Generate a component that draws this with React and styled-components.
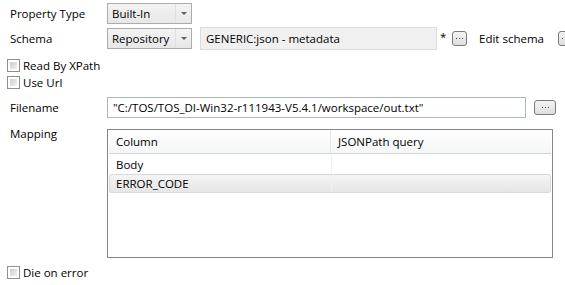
import React from "react";
import styled, { createGlobalStyle } from "styled-components";

const Global = createGlobalStyle`
  html, body { margin: 0; padding: 0; background: #fff; overflow: hidden; }
  body { font-family: "Open Sans", "Noto Sans", sans-serif; font-size: 11.5px; color: #000; }
`;

const Page = styled.div`
  width: 565px;
  height: 285px;
  padding-top: 3px;
  box-sizing: border-box;
  display: flex;
  flex-direction: column;
  overflow: hidden;
`;

const Row = styled.div`
  display: flex;
  align-items: ${(p) => p.$align || "center"};
  height: ${(p) => p.$h}px;
  margin-top: ${(p) => p.$mt || 0}px;
  white-space: nowrap;
  & > * { flex-shrink: 0; }
`;

const Label = styled.div`
  width: 97px;
  padding-left: 10px;
  flex: none;
  line-height: ${(p) => p.$lh || "normal"};
`;

const Combo = styled.div`
  width: 85px;
  height: 21px;
  box-sizing: border-box;
  border: 1px solid #acacac;
  background: linear-gradient(#f3f3f3, #e7e7e7);
  display: flex;
  align-items: center;
  flex: none;
`;

const ComboText = styled.div`
  flex: 1;
  padding-left: 4px;
`;

const ComboArrow = styled.div`
  width: 15px;
  height: 100%;
  border-left: 1px solid #e0e0e0;
  display: flex;
  align-items: center;
  justify-content: center;
  &::after {
    content: "";
    border-left: 3px solid transparent;
    border-right: 3px solid transparent;
    border-top: 3px solid #606060;
  }
`;

const TextField = styled.div`
  width: ${(p) => p.$w}px;
  height: ${(p) => p.$h}px;
  box-sizing: border-box;
  border: 1px solid ${(p) => (p.$disabled ? "#dcdcdc" : "#abb6c6")};
  background: ${(p) => (p.$disabled ? "#f0f0f0" : "#fff")};
  padding-left: 5px;
  display: flex;
  align-items: center;
  flex: none;
  margin-left: ${(p) => p.$ml || 0}px;
`;

const Star = styled.div`
  width: 15px;
  flex: none;
  padding-left: 3px;
  box-sizing: border-box;
  align-self: flex-start;
  margin-top: 2px;
`;

const DotButtonBox = styled.div`
  width: ${(p) => p.$w || 15}px;
  height: 15px;
  box-sizing: border-box;
  border: 1px solid #7a7a7a;
  border-radius: 3px;
  background: linear-gradient(#f4f4f4, #dedede);
  flex: none;
  margin-left: ${(p) => p.$ml || 0}px;
  display: flex;
  align-items: center;
  justify-content: center;
`;

const DotButton = ({ $w, $ml }) => (
  <DotButtonBox $w={$w} $ml={$ml}>
    <svg width="7" height="3" viewBox="0 0 7 3">
      <rect x="0" y="1" width="1" height="1" fill="#3c4f6a" />
      <rect x="3" y="1" width="1" height="1" fill="#3c4f6a" />
      <rect x="6" y="1" width="1" height="1" fill="#3c4f6a" />
    </svg>
  </DotButtonBox>
);

const LinkText = styled.div`
  margin-left: 12px;
  flex: none;
  color: #000;
`;

const CheckRow = styled.div`
  display: flex;
  align-items: center;
  height: ${(p) => p.$h}px;
  padding-left: 7px;
  margin-top: ${(p) => p.$mt || 0}px;
`;

const Box = styled.div`
  width: 13px;
  height: 13px;
  box-sizing: border-box;
  border: 1px solid #8e8f8f;
  background: #fff;
  padding: 2px;
  margin-right: 3px;
  flex: none;
  &::after {
    content: "";
    display: block;
    width: 100%;
    height: 100%;
    background: linear-gradient(135deg, #cbcbcb, #f2f2f2);
  }
`;

const Table = styled.div`
  width: 446px;
  height: 129px;
  box-sizing: border-box;
  border: 1px solid #828790;
  background: #fff;
  flex: none;
  padding: 0 1px;
`;

const Grid = styled.div`
  display: grid;
  grid-template-columns: 221px 1fr;
`;

const HeadCell = styled.div`
  height: 24px;
  box-sizing: border-box;
  border-bottom: 1px solid #d5d5d5;
  border-left: ${(p) => (p.$first ? "none" : "1px solid #e5e5e5")};
  background: linear-gradient(#ffffff, #f5f6f7);
  padding-left: 7px;
  display: flex;
  align-items: center;
`;

const DataRow = styled.div`
  display: grid;
  grid-template-columns: 221px 1fr;
  height: ${(p) => (p.$selected ? 19 : 20)}px;
  box-sizing: border-box;
  ${(p) =>
    p.$selected
      ? `background: linear-gradient(#f4f4f4, #e6e6e6);
         border: 1px solid #dadada;
         border-radius: 2px;`
      : `border: 1px solid transparent;`}
`;

const Cell = styled.div`
  padding-left: 6px;
  display: flex;
  align-items: center;
  border-left: ${(p) => (p.$first ? "none" : "1px solid #eef2f7")};
`;

export default function App() {
  return (
    <>
      <Global />
      <Page>
        <Row $h={21}>
          <Label>Property Type</Label>
          <Combo>
            <ComboText>Built-In</ComboText>
            <ComboArrow />
          </Combo>
        </Row>
        <Row $h={23} $mt={3}>
          <Label>Schema</Label>
          <Combo>
            <ComboText>Repository</ComboText>
            <ComboArrow />
          </Combo>
          <TextField $w={237} $h={23} $ml={8} $disabled>
            GENERIC:json - metadata
          </TextField>
          <Star>*</Star>
          <DotButton />
          <LinkText>Edit schema</LinkText>
          <DotButton $ml={14} />
        </Row>
        <CheckRow $h={16} $mt={7}>
          <Box />
          Read By XPath
        </CheckRow>
        <CheckRow $h={16} $mt={1}>
          <Box />
          Use Url
        </CheckRow>
        <Row $h={21} $mt={7}>
          <Label>Filename</Label>
          <TextField $w={419} $h={21}>
            "C:/TOS/TOS_DI-Win32-r111943-V5.4.1/workspace/out.txt"
          </TextField>
          <DotButton $w={22} $ml={8} />
        </Row>
        <Row $h={129} $mt={11} $align="flex-start">
          <Label $lh="10px">Mapping</Label>
          <Table>
            <Grid>
              <HeadCell $first>Column</HeadCell>
              <HeadCell>JSONPath query</HeadCell>
            </Grid>
            <DataRow>
              <Cell $first>Body</Cell>
              <Cell />
            </DataRow>
            <DataRow $selected>
              <Cell $first>ERROR_CODE</Cell>
              <Cell />
            </DataRow>
          </Table>
        </Row>
        <CheckRow $h={16} $mt={6}>
          <Box />
          Die on error
        </CheckRow>
      </Page>
    </>
  );
}
